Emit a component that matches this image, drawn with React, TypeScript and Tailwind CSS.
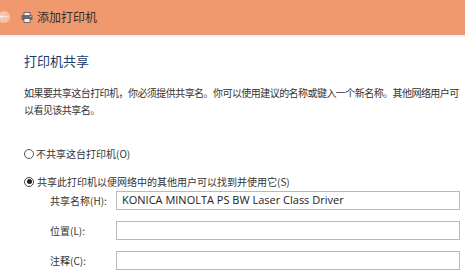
import React from "react";

const font = { fontFamily: '"Noto Sans CJK SC", "Noto Sans", sans-serif' };

function PrinterIcon() {
  return (
    <svg width="12" height="11" viewBox="0 0 12 11">
      <rect x="3" y="0.5" width="6" height="3" fill="#f4f4f4" stroke="#555" strokeWidth="0.8" />
      <rect x="0.5" y="3" width="11" height="5" rx="1" fill="#6b6b6b" />
      <rect x="3" y="6.5" width="6" height="4" fill="#f4f4f4" stroke="#555" strokeWidth="0.8" />
      <rect x="9" y="4" width="1.3" height="1" fill="#cfcfcf" />
    </svg>
  );
}

function Field({ label, value }: { label: string; value?: string }) {
  return (
    <div className="flex items-center h-[19px]">
      <div className="w-[66px] text-[10px] text-[#333] whitespace-nowrap">{label}</div>
      <div className="w-[344px] h-[19px] border border-[#b9b9b9] bg-white flex items-center pl-[5px]">
        <span
          className="text-[11px] text-[#222] whitespace-nowrap"
          style={{ fontFamily: '"Open Sans", "Noto Sans", sans-serif' }}
        >
          {value}
        </span>
      </div>
    </div>
  );
}

export default function App() {
  return (
    <div className="w-[465px] h-[273px] overflow-hidden bg-white" style={font}>
      {/* title bar */}
      <div className="h-[35px] bg-[#f0996f] border-b border-[#d7a086] flex items-center">
        <div className="-ml-[2px] w-[12px] h-[12px] rounded-full bg-white/40 flex items-center justify-center">
          <span className="text-[8px] leading-none text-white">←</span>
        </div>
        <div className="ml-[11px]">
          <PrinterIcon />
        </div>
        <span className="ml-[4px] text-[12px] text-[#3b2a22]">添加打印机</span>
      </div>
      <div className="h-[2px] bg-[#fbeee6]" />

      <div className="pl-[24px]">
        <div className="mt-[15px] text-[13px] leading-[18px] text-[#1d3b6b]">打印机共享</div>

        <p className="mt-[14px] text-[10px] leading-[17px] text-[#333] tracking-[-0.55px] whitespace-nowrap">
          如果要共享这台打印机，你必须提供共享名。你可以使用建议的名称或键入一个新名称。其他网络用户可
          <br />
          以看见该共享名。
        </p>

        <div className="mt-[28px] flex items-center gap-[2px] text-[10px] text-[#333]">
          <span className="w-[10px] h-[10px] rounded-full border border-[#555] bg-white" />
          <span>不共享这台打印机(O)</span>
        </div>

        <div className="mt-[13px] flex items-center gap-[3px] text-[10px] text-[#333]">
          <span className="w-[10px] h-[10px] rounded-full border border-[#444] bg-white flex items-center justify-center">
            <span className="w-[5px] h-[5px] rounded-full bg-[#222]" />
          </span>
          <span>共享此打印机以便网络中的其他用户可以找到并使用它(S)</span>
        </div>

        <div className="mt-[2px] ml-[26px] flex flex-col gap-[11px]">
          <Field label="共享名称(H):" value="KONICA MINOLTA PS BW Laser Class Driver" />
          <Field label="位置(L):" />
          <Field label="注释(C):" />
        </div>
      </div>
    </div>
  );
}
